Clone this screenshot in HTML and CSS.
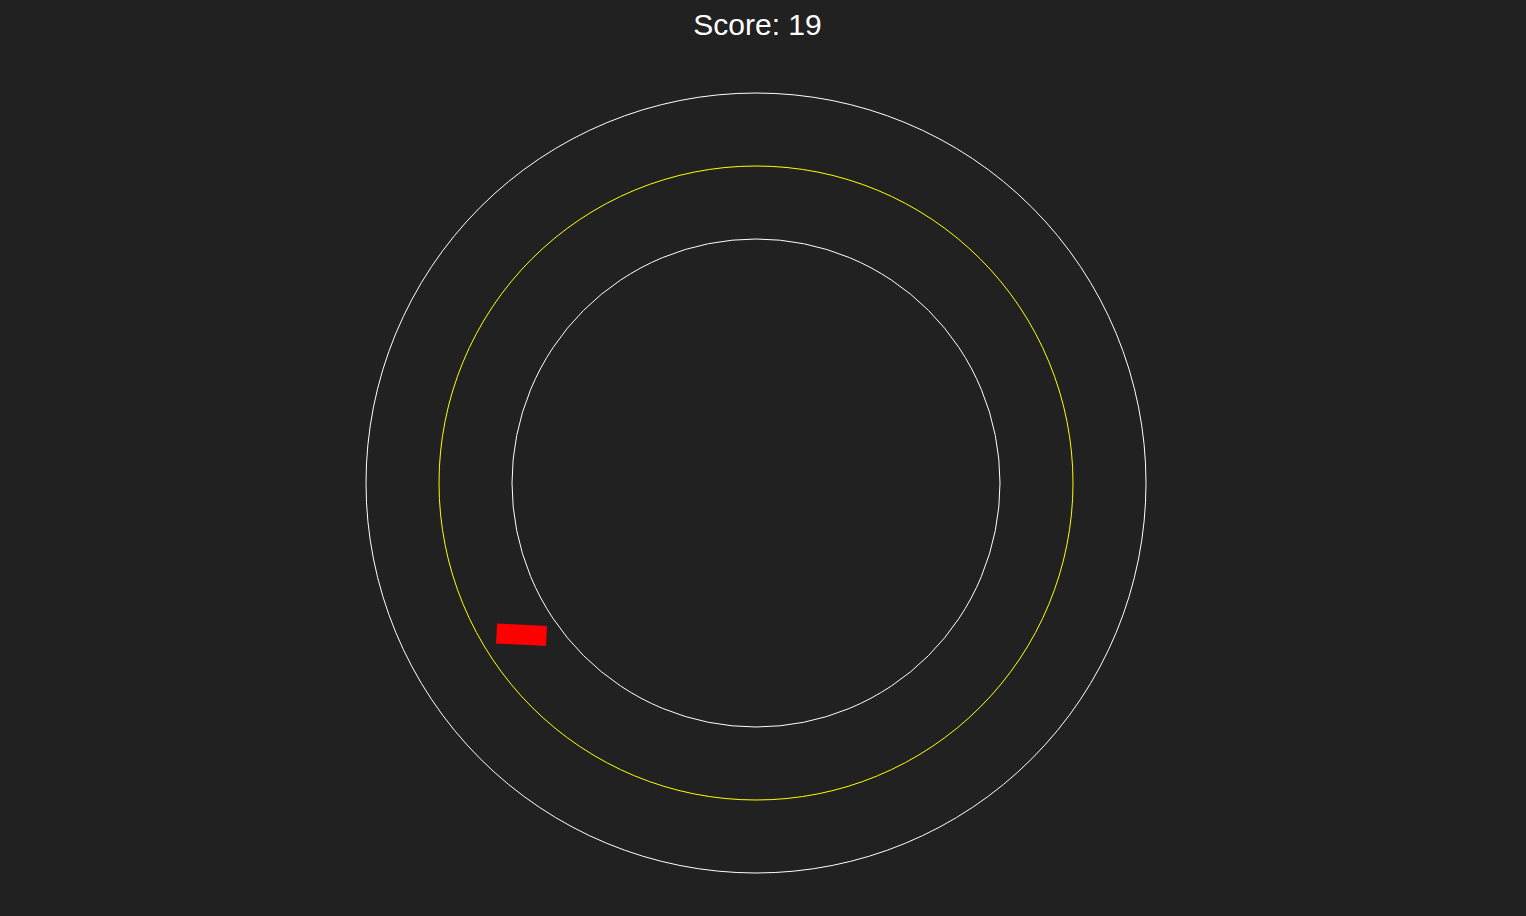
FILE: index.html
```html
<!DOCTYPE html>
<html>
<head>
<meta charset="utf-8">
<link rel="stylesheet" href="styles.css">
</head>
<body>
<div class="stage">
  <svg class="board" width="1526" height="916" viewBox="0 0 1526 916">
    <circle cx="756" cy="483" r="390" fill="none" stroke="#ffffff" stroke-width="1"/>
    <circle cx="756" cy="483" r="317" fill="none" stroke="#ffff00" stroke-width="1"/>
    <circle cx="756" cy="483" r="244" fill="none" stroke="#ffffff" stroke-width="1"/>
    <rect x="-25" y="-10" width="50" height="20" fill="#ff0000" transform="translate(521.5 634.8) rotate(3)"/>
  </svg>
  <div class="score">Score: 19</div>
</div>
</body>
</html>
```
FILE: styles.css
```css
html, body {
  margin: 0;
  padding: 0;
  background: #212121;
  overflow: hidden;
}
.stage {
  position: relative;
  width: 1526px;
  height: 916px;
}
.board {
  position: absolute;
  left: 0;
  top: 0;
  display: block;
}
.score {
  position: relative;
  width: 1515px;
  padding-top: 8px;
  text-align: center;
  color: #ffffff;
  font-family: "Liberation Sans", Arial, sans-serif;
  font-size: 30px;
}
```
